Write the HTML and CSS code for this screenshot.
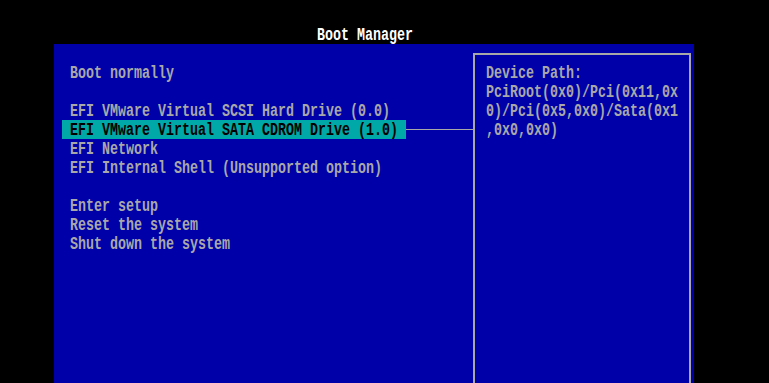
FILE: index.html
```html
<!DOCTYPE html>
<html>
<head>
<meta charset="utf-8">
<link rel="stylesheet" href="styles.css">
</head>
<body>
<div class="screen">
  <div class="title row"><span class="t">Boot Manager</span></div>
  <div class="panel">
    <div class="menu">
      <div class="row"><span class="t">Boot normally</span></div>
      <div class="row"></div>
      <div class="row"><span class="t">EFI VMware Virtual SCSI Hard Drive (0.0)</span></div>
      <div class="row sel"><span class="t">EFI VMware Virtual SATA CDROM Drive (1.0)</span></div>
      <div class="row"><span class="t">EFI Network</span></div>
      <div class="row"><span class="t">EFI Internal Shell (Unsupported option)</span></div>
      <div class="row"></div>
      <div class="row"><span class="t">Enter setup</span></div>
      <div class="row"><span class="t">Reset the system</span></div>
      <div class="row"><span class="t">Shut down the system</span></div>
    </div>
    <div class="connector"></div>
    <div class="help">
      <div class="row"><span class="t">Device Path:</span></div>
      <div class="row"><span class="t">PciRoot(0x0)/Pci(0x11,0x</span></div>
      <div class="row"><span class="t">0)/Pci(0x5,0x0)/Sata(0x1</span></div>
      <div class="row"><span class="t">,0x0,0x0)</span></div>
    </div>
  </div>
</div>
</body>
</html>
```
FILE: styles.css
```css
html, body {
  margin: 0;
  padding: 0;
  background: #000;
  width: 769px;
  height: 383px;
  overflow: hidden;
}
.screen {
  font-family: "Liberation Mono", "DejaVu Sans Mono", monospace;
  font-size: 13.333px;
  font-weight: bold;
  color: #a8a8a8;
  padding-top: 25px;
}
.row {
  height: 19px;
  display: flex;
  align-items: center;
  white-space: pre;
}
.t {
  display: block;
  line-height: 12px;
  transform: translateY(1px) scaleY(1.42);
}
.title {
  padding-left: 317px;
  color: #fff;
}
.panel {
  margin-left: 54px;
  width: 640px;
  height: 339px;
  background: #0000a8;
  display: flex;
  align-items: flex-start;
}
.menu {
  margin-left: 8px;
  padding-top: 19px;
  width: 344px;
}
.menu .row {
  padding-left: 8px;
}
.menu .sel {
  background: #00a8a8;
  color: #000;
}
.connector {
  margin-top: 85px;
  width: 67px;
  height: 1px;
  background: #a8a8a8;
}
.help {
  margin-top: 9px;
  width: 218px;
  height: 340px;
  border: 2px solid #a8a8a8;
  border-bottom: none;
  padding-top: 8px;
  padding-left: 11px;
  box-sizing: border-box;
}
```
